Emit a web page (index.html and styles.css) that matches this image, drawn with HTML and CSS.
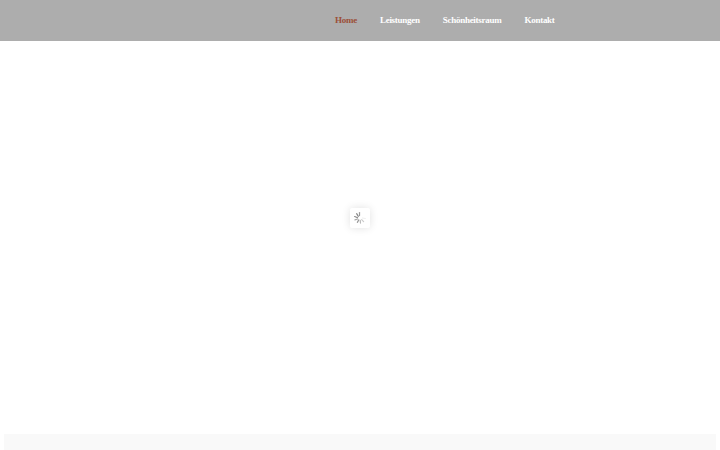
FILE: index.html
```html
<!DOCTYPE html>
<html lang="de">
<head>
  <meta charset="UTF-8">
  <meta name="viewport" content="width=device-width, initial-scale=1.0">
  <title>Home</title>
  <link rel="stylesheet" href="styles.css">
</head>
<body>

  <header class="site-header">
    <nav class="main-nav">
      <a class="nav-link active" href="#">Home</a>
      <a class="nav-link" href="#">Leistungen</a>
      <a class="nav-link" href="#">Schönheitsraum</a>
      <a class="nav-link" href="#">Kontakt</a>
    </nav>
  </header>

  <main class="content"></main>

  <div class="footer-strip"></div>

  <!-- Lade-Symbol liegt über dem Inhalt -->
  <div class="loader">
    <svg class="spinner" width="12" height="12" viewBox="0 0 10 10" fill="none" stroke-linecap="round">
      <path d="M4.6 .5V3" stroke="#999" stroke-width="1"/>
      <path d="M2.2 1.4L3.6 3.6" stroke="#888" stroke-width="1"/>
      <path d="M.6 3.8L3 4.8" stroke="#888" stroke-width="1"/>
      <path d="M.8 6.6L3 5.8" stroke="#aaa" stroke-width="1"/>
      <path d="M2.8 8.6L4 6.6" stroke="#999" stroke-width="1"/>
      <path d="M5.4 9.2L5.2 7" stroke="#bbb" stroke-width="1"/>
      <path d="M8 8L6.4 6.4" stroke="#ccc" stroke-width="1"/>
      <path d="M9.4 5.4L7 5" stroke="#eee" stroke-width="1"/>
    </svg>
  </div>

</body>
</html>
```

FILE: styles.css
```css
html, body {
  height: 100%;
}
body {
  display: flex;
  flex-direction: column;
  margin: 0;
  background-color: #fff;
  font-family: "Liberation Serif", serif;
  overflow: hidden;
}
.site-header {
  flex: none;
  height: 41px;
  background-color: #adadad;
}
.main-nav {
  display: flex;
  align-items: center;
  gap: 23px;
  height: 100%;
  padding-left: 335px;
  padding-bottom: 1px;
  box-sizing: border-box;
}
.nav-link {
  color: #fff;
  font-size: 9px;
  font-weight: bold;
  letter-spacing: -0.27px;
  text-decoration: none;
}
.nav-link.active {
  color: #9c4f38;
}
.content {
  flex: 1;
}
.footer-strip {
  flex: none;
  height: 16px;
  margin: 0 4px;
  background-color: #f9f9f9;
}
.loader {
  position: absolute;
  top: 208px;
  left: 350px;
  display: flex;
  align-items: center;
  justify-content: center;
  width: 20px;
  height: 20px;
  background-color: #fff;
  border-radius: 2px;
  box-shadow: 0 0 8px rgba(0,0,0,0.12);
}
```
